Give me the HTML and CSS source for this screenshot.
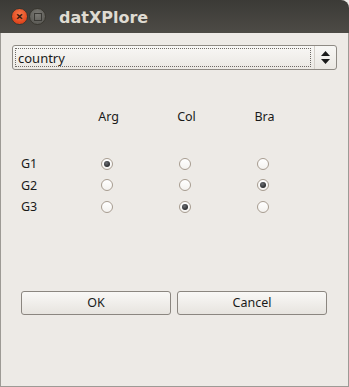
FILE: index.html
```html
<!DOCTYPE html>
<html lang="en">
<head>
    <meta charset="UTF-8">
    <meta name="viewport" content="width=device-width, initial-scale=1.0">
    <title>datXPlore</title>
    <link rel="stylesheet" href="styles.css">
</head>
<body>

    <div class="window">
        <div class="titlebar">
            <span class="win-btn close-btn">&times;</span>
            <span class="win-btn max-btn"><span class="max-square"></span></span>
            <span class="title">datXPlore</span>
        </div>

        <div class="content">
            <div class="combo">
                <div class="combo-text"><span>country</span></div>
                <div class="combo-arrows">
                    <svg width="9" height="13" viewBox="0 0 9 13">
                        <polygon points="4.5,0 9,5 0,5" fill="#1a1a1a"/>
                        <polygon points="0,8 9,8 4.5,13" fill="#1a1a1a"/>
                    </svg>
                </div>
            </div>

            <div class="grid">
                <div></div>
                <div class="col-head">Arg</div>
                <div class="col-head">Col</div>
                <div class="col-head">Bra</div>

                <div class="row-label">G1</div>
                <div class="cell"><span class="radio checked"></span></div>
                <div class="cell"><span class="radio"></span></div>
                <div class="cell"><span class="radio"></span></div>

                <div class="row-label">G2</div>
                <div class="cell"><span class="radio"></span></div>
                <div class="cell"><span class="radio"></span></div>
                <div class="cell"><span class="radio checked"></span></div>

                <div class="row-label">G3</div>
                <div class="cell"><span class="radio"></span></div>
                <div class="cell"><span class="radio checked"></span></div>
                <div class="cell"><span class="radio"></span></div>
            </div>

            <div class="buttons">
                <button class="btn">OK</button>
                <button class="btn">Cancel</button>
            </div>
        </div>
    </div>

</body>
</html>
```

FILE: styles.css
```css
html, body {
    margin: 0;
    padding: 0;
    background-color: #edeae6;
}

body {
    font-family: "Noto Sans", "DejaVu Sans", sans-serif;
    font-size: 12px;
    color: #1a1a1a;
}

.window {
    width: 349px;
    height: 387px;
    box-sizing: border-box;
    display: flex;
    flex-direction: column;
}

.titlebar {
    height: 33px;
    flex-shrink: 0;
    display: flex;
    align-items: center;
    background: linear-gradient(#3b3a36, #4d4b46);
    border-top-right-radius: 8px;
    padding-left: 11px;
    box-sizing: border-box;
}

.win-btn {
    width: 17px;
    height: 17px;
    border-radius: 50%;
    display: flex;
    align-items: center;
    justify-content: center;
    margin-right: 1px;
    box-sizing: border-box;
}

.close-btn {
    background: radial-gradient(circle at 50% 35%, #f77a4b, #e0461d 70%);
    border: 1px solid #38362f;
    color: #3a1a0e;
    font-size: 13px;
    line-height: 1;
    font-weight: bold;
}

.max-btn {
    background: radial-gradient(circle at 50% 35%, #7b7a75, #5e5d58 70%);
    border: 1px solid #38362f;
}

.max-square {
    width: 6px;
    height: 6px;
    border: 1.5px solid #3a3935;
}

.title {
    margin-left: 12px;
    margin-top: 1px;
    font-family: "DejaVu Sans", sans-serif;
    font-weight: bold;
    font-size: 16px;
    color: #dfdbd2;
}

.content {
    flex: 1;
    border-left: 1px solid #9d9a95;
    border-right: 1px solid #9d9a95;
    border-bottom: 1px solid #9d9a95;
    padding: 12px 11px 0 11px;
}

.combo {
    height: 25px;
    box-sizing: border-box;
    display: flex;
    border: 1px solid #8e8a84;
    border-radius: 3px;
    background: linear-gradient(#f8f7f5, #ebe8e3);
}

.combo-text {
    flex: 1;
    padding: 2px 3px 2px 2px;
}

.combo-text span {
    display: flex;
    align-items: center;
    height: 100%;
    box-sizing: border-box;
    border: 1px dotted #6e6a66;
    padding-left: 2px;
    font-size: 13px;
}

.combo-arrows {
    width: 21px;
    border-left: 1px solid #d4d0ca;
    display: flex;
    align-items: center;
    justify-content: center;
}

.grid {
    display: grid;
    grid-template-columns: 47px 78px 78px 78px;
    grid-template-rows: 46px 21.5px 21.5px 21.5px;
    margin-top: 37px;
    margin-left: 9px;
}

.col-head {
    text-align: center;
    font-size: 12.5px;
    line-height: 20px;
    padding-left: 3px;
}

.row-label {
    display: flex;
    align-items: center;
    font-size: 12.5px;
}

.cell {
    display: flex;
    align-items: center;
    justify-content: center;
}

.radio {
    width: 12px;
    height: 12px;
    border-radius: 50%;
    box-sizing: border-box;
    border: 1px solid #a79c90;
    background: linear-gradient(#ffffff, #f4f2ef);
    display: flex;
    align-items: center;
    justify-content: center;
}

.radio.checked::after {
    content: "";
    width: 6px;
    height: 6px;
    border-radius: 50%;
    background: radial-gradient(circle at 40% 35%, #6b6e73, #2c2d30 70%);
}

.buttons {
    display: flex;
    gap: 6px;
    margin-top: 73px;
    margin-left: 9px;
    margin-right: 10px;
}

.btn {
    flex: 1;
    height: 24px;
    font-family: "Noto Sans", "DejaVu Sans", sans-serif;
    font-size: 12.5px;
    color: #1a1a1a;
    border: 1px solid #8b8680;
    border-radius: 3px;
    background: linear-gradient(#f9f8f6, #e7e4df);
    padding: 0;
}
```
